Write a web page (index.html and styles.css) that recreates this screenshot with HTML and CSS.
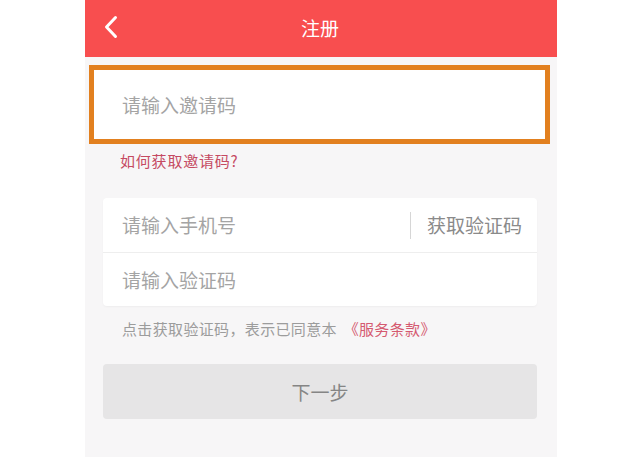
FILE: index.html
```html
<!DOCTYPE html>
<html lang="zh-CN">
<head>
<meta charset="utf-8">
<title>注册</title>
<link rel="stylesheet" href="styles.css">
</head>
<body>
<div class="page">
  <header class="topbar">
    <span class="back">
      <svg width="15" height="24" viewBox="0 0 15 24"><path d="M12.5 2.5 L3.5 12 L12.5 21.5" fill="none" stroke="#fff" stroke-width="3" stroke-linecap="round" stroke-linejoin="round"/></svg>
    </span>
    <h1 class="title">注册</h1>
    <span class="spacer"></span>
  </header>

  <div class="invite">
    <span class="ph">请输入邀请码</span>
  </div>
  <div class="help">如何获取邀请码?</div>

  <div class="card">
    <div class="row">
      <span class="ph grow">请输入手机号</span>
      <span class="vline"></span>
      <span class="getcode">获取验证码</span>
    </div>
    <div class="row">
      <span class="ph grow">请输入验证码</span>
    </div>
  </div>

  <p class="note">点击获取验证码，表示已同意本 <span class="terms">《服务条款》</span></p>

  <div class="btn">下一步</div>
</div>
</body>
</html>
```

FILE: styles.css
```css
* { box-sizing: border-box; }
html, body {
  margin: 0;
  padding: 0;
  background: #ffffff;
  font-family: "Noto Sans CJK SC", "Noto Sans", sans-serif;
}
.page {
  width: 472px;
  height: 457px;
  margin-left: 85px;
  background: #f7f6f7;
  display: flex;
  flex-direction: column;
}
.topbar {
  height: 57px;
  background: #f84e4f;
  display: grid;
  grid-template-columns: 60px 1fr 60px;
  align-items: center;
  flex: none;
}
.back {
  display: flex;
  padding-left: 18px;
  padding-bottom: 3px;
}
.title {
  margin: 0;
  text-align: center;
  color: #fff;
  font-size: 19px;
  font-weight: 400;
  padding-bottom: 3px;
  padding-right: 2px;
}
.invite {
  margin: 8px 7px 0 4px;
  height: 79px;
  border: 5px solid #e2801f;
  background: #fff;
  display: flex;
  align-items: center;
  padding-left: 28px;
  flex: none;
}
.ph {
  font-size: 19px;
  color: #a4a4a4;
  line-height: 24px;
}
.help {
  margin: 6px 0 0 35px;
  font-size: 15px;
  letter-spacing: 0.8px;
  line-height: 22px;
  color: #c54a62;
}
.card {
  margin: 26px 20px 0 18px;
  background: #fff;
  border-radius: 4px;
  box-shadow: 0 1px 2px rgba(0, 0, 0, 0.04);
  flex: none;
}
.row {
  height: 54px;
  display: flex;
  align-items: center;
  padding: 0 15px 0 19px;
}
.row + .row {
  height: 54px;
  border-top: 1px solid #eeeeee;
}
.grow { flex: 1; }
.vline {
  width: 1px;
  height: 27px;
  background: #d6d6d6;
  margin-right: 16px;
}
.getcode {
  font-size: 19px;
  color: #8a8a8a;
  line-height: 24px;
}
.note {
  margin: 12px 0 0 37px;
  font-size: 15px;
  letter-spacing: 0.35px;
  line-height: 22px;
  color: #9c9c9c;
}
.terms { color: #d55a70; margin-left: 3px; }
.btn {
  margin: 24px 20px 0 18px;
  height: 55px;
  border-radius: 4px;
  background: #e6e5e6;
  color: #858585;
  font-size: 19px;
  display: flex;
  align-items: center;
  justify-content: center;
  flex: none;
}
```
